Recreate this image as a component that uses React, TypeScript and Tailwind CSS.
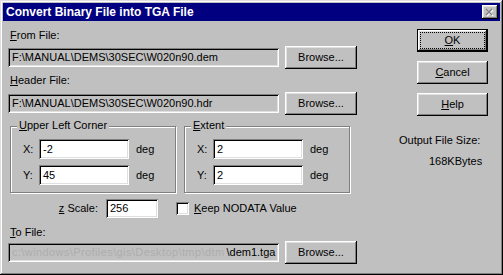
import React from "react";

const raised =
  "shadow-[inset_-1px_-1px_#000,inset_1px_1px_#fff,inset_-2px_-2px_#808080,inset_2px_2px_#dfdfdf]";
const sunken =
  "shadow-[inset_1px_1px_#808080,inset_-1px_-1px_#fff,inset_2px_2px_#000,inset_-2px_-2px_#dfdfdf]";

function U({ children }: { children: React.ReactNode }) {
  return <span className="underline underline-offset-[1px] decoration-1">{children}</span>;
}

function Button({ children, className = "" }: { children: React.ReactNode; className?: string }) {
  return (
    <div
      className={`flex items-center justify-center bg-[#c0c0c0] ${raised} ${className}`}
    >
      {children}
    </div>
  );
}

function Field({
  children,
  className = "",
  white = false,
}: {
  children?: React.ReactNode;
  className?: string;
  white?: boolean;
}) {
  return (
    <div
      className={`flex items-center pl-[4px] whitespace-nowrap overflow-hidden ${
        white ? "bg-white" : "bg-[#c0c0c0]"
      } ${sunken} ${className}`}
    >
      {children}
    </div>
  );
}

function Group({
  label,
  children,
  className = "",
}: {
  label: React.ReactNode;
  children: React.ReactNode;
  className?: string;
}) {
  return (
    <div
      className={`relative border border-[#808080] shadow-[inset_1px_1px_#fff,1px_1px_#fff] ${className}`}
    >
      <div className="absolute left-[6px] top-[-8px] bg-[#c0c0c0] px-[2px] leading-[13px]">
        {label}
      </div>
      {children}
    </div>
  );
}

function CoordRow({ label, value }: { label: string; value: string }) {
  return (
    <div className="flex items-center h-[20px]">
      <div className="w-[16px]">{label}</div>
      <Field white className="w-[90px] h-[20px] pl-[3px]">
        {value}
      </Field>
      <div className="ml-[7px]">deg</div>
    </div>
  );
}

export default function App() {
  return (
    <div
      className="w-[503px] h-[275px] bg-[#c0c0c0] p-[3px] text-[11px] leading-[13px] text-black shadow-[inset_-1px_-1px_#000,inset_1px_1px_#dfdfdf,inset_-2px_-2px_#808080,inset_2px_2px_#fff] select-none"
      style={{ fontFamily: '"Liberation Sans", Arial, sans-serif' }}
    >
      {/* Title bar */}
      <div className="h-[18px] bg-[#000080] flex items-center justify-between pl-[3px] pr-[2px]">
        <div className="text-white font-bold text-[12px] leading-[14px]">
          Convert Binary File into TGA File
        </div>
        <div className={`w-[16px] h-[14px] bg-[#c0c0c0] flex items-center justify-center ${raised}`}>
          <svg width="10" height="9" viewBox="0 0 10 9" className="block">
            <path d="M2 2 L8 8 M8 2 L2 8" stroke="#fff" strokeWidth="1.3" />
            <path d="M1 1 L7 7 M7 1 L1 7" stroke="#808080" strokeWidth="1.3" />
          </svg>
        </div>
      </div>

      {/* Body */}
      <div className="flex pl-[5px]">
        {/* Left column */}
        <div className="w-[349px] flex flex-col">
          <div className="mt-[8px] pl-[2px]">
            <U>F</U>rom File:
          </div>
          <div className="mt-[4px] flex items-center gap-[6px] h-[23px]">
            <Field className="w-[271px] h-[19px]">F:\MANUAL\DEMS\30SEC\W020n90.dem</Field>
            <Button className="w-[72px] h-[23px]">Browse...</Button>
          </div>

          <div className="mt-[5px] pl-[2px]">
            <U>H</U>eader File:
          </div>
          <div className="mt-[5px] flex items-center gap-[6px] h-[23px]">
            <Field className="w-[271px] h-[19px]">F:\MANUAL\DEMS\30SEC\W020n90.hdr</Field>
            <Button className="w-[72px] h-[23px]">Browse...</Button>
          </div>

          <div className="mt-[11px] ml-[2px] flex gap-[8px]">
            <Group
              className="w-[166px] h-[67px]"
              label={
                <>
                  <U>U</U>pper Left Corner
                </>
              }
            >
              <div className="pt-[12px] pl-[12px] flex flex-col gap-[6px]">
                <CoordRow label="X:" value="-2" />
                <CoordRow label="Y:" value="45" />
              </div>
            </Group>
            <Group
              className="w-[166px] h-[67px]"
              label={
                <>
                  <U>E</U>xtent
                </>
              }
            >
              <div className="pt-[12px] pl-[12px] flex flex-col gap-[6px]">
                <CoordRow label="X:" value="2" />
                <CoordRow label="Y:" value="2" />
              </div>
            </Group>
          </div>

          <div className="mt-[6px] flex items-center h-[19px]">
            <div className="w-[90px] text-right">
              <U>z</U> Scale:
            </div>
            <Field white className="ml-[8px] w-[52px] h-[19px] pl-[3px]">
              256
            </Field>
            <div className={`ml-[18px] w-[13px] h-[13px] bg-white ${sunken}`} />
            <div className="ml-[5px]">
              <U>K</U>eep NODATA Value
            </div>
          </div>

          <div className="mt-[8px] pl-[2px]">
            <U>T</U>o File:
          </div>
          <div className="mt-[2px] flex items-center gap-[6px] h-[23px]">
            <Field className="w-[271px] h-[19px]">
              <span className="text-[#adadad] tracking-[0.4px] mr-[2px]">
                c:\windows\Profiles\gis\Desktop\tmp\dtm
              </span>
              <span>\dem1.tga</span>
            </Field>
            <Button className="w-[72px] h-[23px]">Browse...</Button>
          </div>
        </div>

        {/* Right column */}
        <div className="ml-[42px] flex flex-col pt-[8px]">
          <div className="ml-[18px] w-[71px] h-[23px] border border-black bg-[#c0c0c0] flex shadow-[inset_-1px_-1px_#000,inset_1px_1px_#fff,inset_-2px_-2px_#808080,inset_2px_2px_#dfdfdf]">
            <div className="m-[2px] flex-1 border border-dotted border-black flex items-center justify-center">
              <U>O</U>K
            </div>
          </div>
          <Button className="ml-[18px] mt-[9px] w-[71px] h-[23px]">
            <span>
              <U>C</U>ancel
            </span>
          </Button>
          <Button className="ml-[18px] mt-[9px] w-[71px] h-[23px]">
            <span>
              <U>H</U>elp
            </span>
          </Button>
          <div className="mt-[18px]">Output File Size:</div>
          <div className="mt-[8px] pl-[30px]">168KBytes</div>
        </div>
      </div>
    </div>
  );
}
